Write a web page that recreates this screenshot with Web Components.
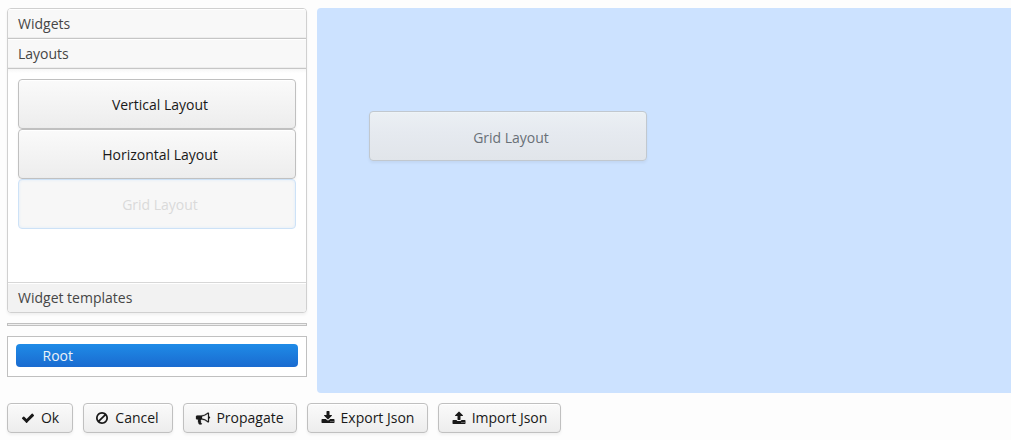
<!DOCTYPE html>
<html lang="en">
<head>
<meta charset="utf-8">
<title>Layout editor</title>
<style>
html,body{margin:0;height:100%;background:#fdfdfd;overflow:hidden}
body{font:400 14px/20px "Open Sans",sans-serif;color:#404040}
</style>
</head>
<body>
<layout-editor></layout-editor>
<script>
const ICONS = {
  check: 'M1671 566q0 40-28 68l-724 724-136 136q-28 28-68 28t-68-28l-136-136-362-362q-28-28-28-68t28-68l136-136q28-28 68-28t68 28l294 295 656-657q28-28 68-28t68 28l136 136q28 28 28 68z',
  ban: 'M1440 893q0-161-87-295l-754 753q137 89 297 89 111 0 211.5-43.5t173.5-116.5 116-174.5 43-212.5zm-999 299l755-754q-135-91-300-91-148 0-273 73t-198 199-73 274q0 162 89 299zm1223-299q0 157-61 300t-163.5 246-245 164-298.5 61-298.5-61-245-164-163.5-246-61-300 61-299.5 163.5-245.5 245-164 298.5-61 298.5 61 245 164 163.5 245.5 61 299.5z',
  bullhorn: 'M1664 640q53 0 90.5 37.5t37.5 90.5-37.5 90.5-90.5 37.5v384q0 52-38 90t-90 38q-417-347-812-380-58 19-91 66t-31 100.5 40 92.5q-20 33-23 65.5t6 58 33.5 55 48 50 61.5 50.5q-29 58-111.5 83t-168.5 11.5-132-55.5q-7-23-29.5-87.5t-32-94.5-23-89-15-101 3.5-98.5 22-110.5h-122q-66 0-113-47t-47-113v-192q0-66 47-113t113-47h480q435 0 896-384 52 0 90 38t38 90v384zm-128 604v-954q-394 302-768 343v270q377 42 768 341z',
  download: 'M1344 1344q0-26-19-45t-45-19-45 19-19 45 19 45 45 19 45-19 19-45zm256 0q0-26-19-45t-45-19-45 19-19 45 19 45 45 19 45-19 19-45zm128-224v320q0 40-28 68t-68 28h-1472q-40 0-68-28t-28-68v-320q0-40 28-68t68-28h465l135 136q58 56 136 56t136-56l136-136h464q40 0 68 28t28 68zm-325-569q17 41-14 70l-448 448q-18 19-45 19t-45-19l-448-448q-31-29-14-70 17-39 59-39h256v-448q0-26 19-45t45-19h256q26 0 45 19t19 45v448h256q42 0 59 39z',
  upload: 'M1344 1472q0-26-19-45t-45-19-45 19-19 45 19 45 45 19 45-19 19-45zm256 0q0-26-19-45t-45-19-45 19-19 45 19 45 45 19 45-19 19-45zm128-224v320q0 40-28 68t-68 28h-1472q-40 0-68-28t-28-68v-320q0-40 28-68t68-28h427q21 56 70.5 92t110.5 36h256q61 0 110.5-36t70.5-92h427q40 0 68 28t28 68zm-325-648q-17 40-59 40h-256v448q0 26-19 45t-45 19h-256q-26 0-45-19t-19-45v-448h-256q-42 0-59-40-17-39 14-69l448-448q18-19 45-19t45 19l448 448q31 30 14 69z'
};

class GlyphIcon extends HTMLElement {
  connectedCallback() {
    this.attachShadow({mode: 'open'}).innerHTML = `
      <style>:host{display:block;width:14px;height:14px;flex:none}svg{display:block;overflow:visible}
        :host([name=bullhorn]) svg{transform:translateY(.5px);stroke:currentColor;stroke-width:30}</style>
      <svg width="14" height="14" viewBox="0 0 1792 1792" fill="currentColor"><path d="${ICONS[this.getAttribute('name')]}"/></svg>`;
  }
}
customElements.define('glyph-icon', GlyphIcon);

class UiButton extends HTMLElement {
  connectedCallback() {
    const icon = this.getAttribute('icon');
    this.attachShadow({mode: 'open'}).innerHTML = `
      <style>
        :host{display:flex;align-items:center;justify-content:center;box-sizing:border-box;height:30px;gap:6px;
          border:1px solid #c0c0c0;border-radius:4px;color:#191919;white-space:nowrap;
          background:linear-gradient(#fafafa 2%,#ededed 98%);
          box-shadow:inset 0 1px 0 #fff,inset 0 -1px 0 #ebebeb,0 2px 3px rgba(0,0,0,.05)}
        :host([large]){height:50px;padding:2px 0 0 6px}
        :host([dragged]){border-color:#cde2f7;background:#f7f7f7;color:#dadada;
          box-shadow:inset 0 0 3px #dceaf8}
        :host([ghost]){padding-top:4px;border-color:#c1c8cf;color:#697077;
          background:linear-gradient(#ebf0f4,#e6eaf0 40%,#e1e5ea);
          box-shadow:inset 0 1px 0 #edf3f7,0 2px 3px rgba(0,0,0,.05)}
      </style>
      ${icon ? `<glyph-icon name="${icon}"></glyph-icon>` : ''}<span><slot></slot></span>`;
  }
}
customElements.define('ui-button', UiButton);

class AccordionItem extends HTMLElement {
  connectedCallback() {
    this.attachShadow({mode: 'open'}).innerHTML = `
      <style>
        :host{display:flex;flex-direction:column;flex:none}
        :host([open]){flex:1}
        header{box-sizing:border-box;height:30px;padding:5px 10px 4px;background:#f8f8f8;
          border-bottom:1px solid #c6c6c6;box-shadow:inset 0 1px #fff,inset 0 -1px #ededed;color:#464646}
        :host([last]) header{background:#f2f2f2;border-top:1px solid #d7d7d7;border-bottom:0;box-shadow:inset 0 1px #fff}
        section{display:none}
        :host([open]) section{display:block;flex:1;padding:10px;background:linear-gradient(#f6f6f6,#fff 4px)}
      </style>
      <header>${this.getAttribute('caption')}</header><section><slot></slot></section>`;
  }
}
customElements.define('accordion-item', AccordionItem);

class UiAccordion extends HTMLElement {
  connectedCallback() {
    this.attachShadow({mode: 'open'}).innerHTML = `
      <style>:host{display:flex;flex-direction:column;box-sizing:border-box;height:305px;overflow:hidden;
        border:1px solid #d0d0d0;border-radius:4px;background:#fff;box-shadow:0 2px 3px rgba(0,0,0,.05)}</style>
      <slot></slot>`;
  }
}
customElements.define('ui-accordion', UiAccordion);

class ComponentTree extends HTMLElement {
  connectedCallback() {
    this.attachShadow({mode: 'open'}).innerHTML = `
      <style>
        :host{display:block;box-sizing:border-box;height:41px;border:1px solid #c0c0c0;background:#fff;padding:7px 8px}
        div{height:23px;line-height:23px;padding-left:26.5px;border-radius:4px;color:#ecf2f8;
          background:linear-gradient(#1f8be7,#1a6bd0)}
      </style>
      <div><slot></slot></div>`;
  }
}
customElements.define('component-tree', ComponentTree);

class DesignCanvas extends HTMLElement {
  connectedCallback() {
    this.attachShadow({mode: 'open'}).innerHTML = `
      <style>
        :host{display:block;position:relative;background:#cce2ff;border-radius:4px 0 0 4px}
        ::slotted(ui-button){position:absolute;left:52px;top:103px;width:278px}
      </style>
      <slot></slot>`;
  }
}
customElements.define('design-canvas', DesignCanvas);

class LayoutEditor extends HTMLElement {
  connectedCallback() {
    this.attachShadow({mode: 'open'}).innerHTML = `
      <style>
        :host{display:flex;flex-direction:column;box-sizing:border-box;height:440px;padding:8px 0 7px 7px;gap:10px}
        main{display:grid;grid-template-columns:300px 1fr;gap:10px;height:385px}
        aside{display:flex;flex-direction:column;gap:10px}
        .splitter{box-sizing:border-box;height:3px;border:1px solid #c0c0c0;background:#eee}
        footer{display:flex;gap:10px}
      </style>
      <main>
        <aside>
          <ui-accordion>
            <accordion-item caption="Widgets"></accordion-item>
            <accordion-item caption="Layouts" open>
              <ui-button large>Vertical Layout</ui-button>
              <ui-button large>Horizontal Layout</ui-button>
              <ui-button large dragged>Grid Layout</ui-button>
            </accordion-item>
            <accordion-item caption="Widget templates" last></accordion-item>
          </ui-accordion>
          <div class="splitter"></div>
          <component-tree>Root</component-tree>
        </aside>
        <design-canvas><ui-button large ghost>Grid Layout</ui-button></design-canvas>
      </main>
      <footer>
        <ui-button icon="check" style="width:66px">Ok</ui-button>
        <ui-button icon="ban" style="width:90px;padding-right:2px">Cancel</ui-button>
        <ui-button icon="bullhorn" style="width:114px">Propagate</ui-button>
        <ui-button icon="download" style="width:121px">Export Json</ui-button>
        <ui-button icon="upload" style="width:123px">Import Json</ui-button>
      </footer>`;
  }
}
customElements.define('layout-editor', LayoutEditor);
</script>
</body>
</html>
